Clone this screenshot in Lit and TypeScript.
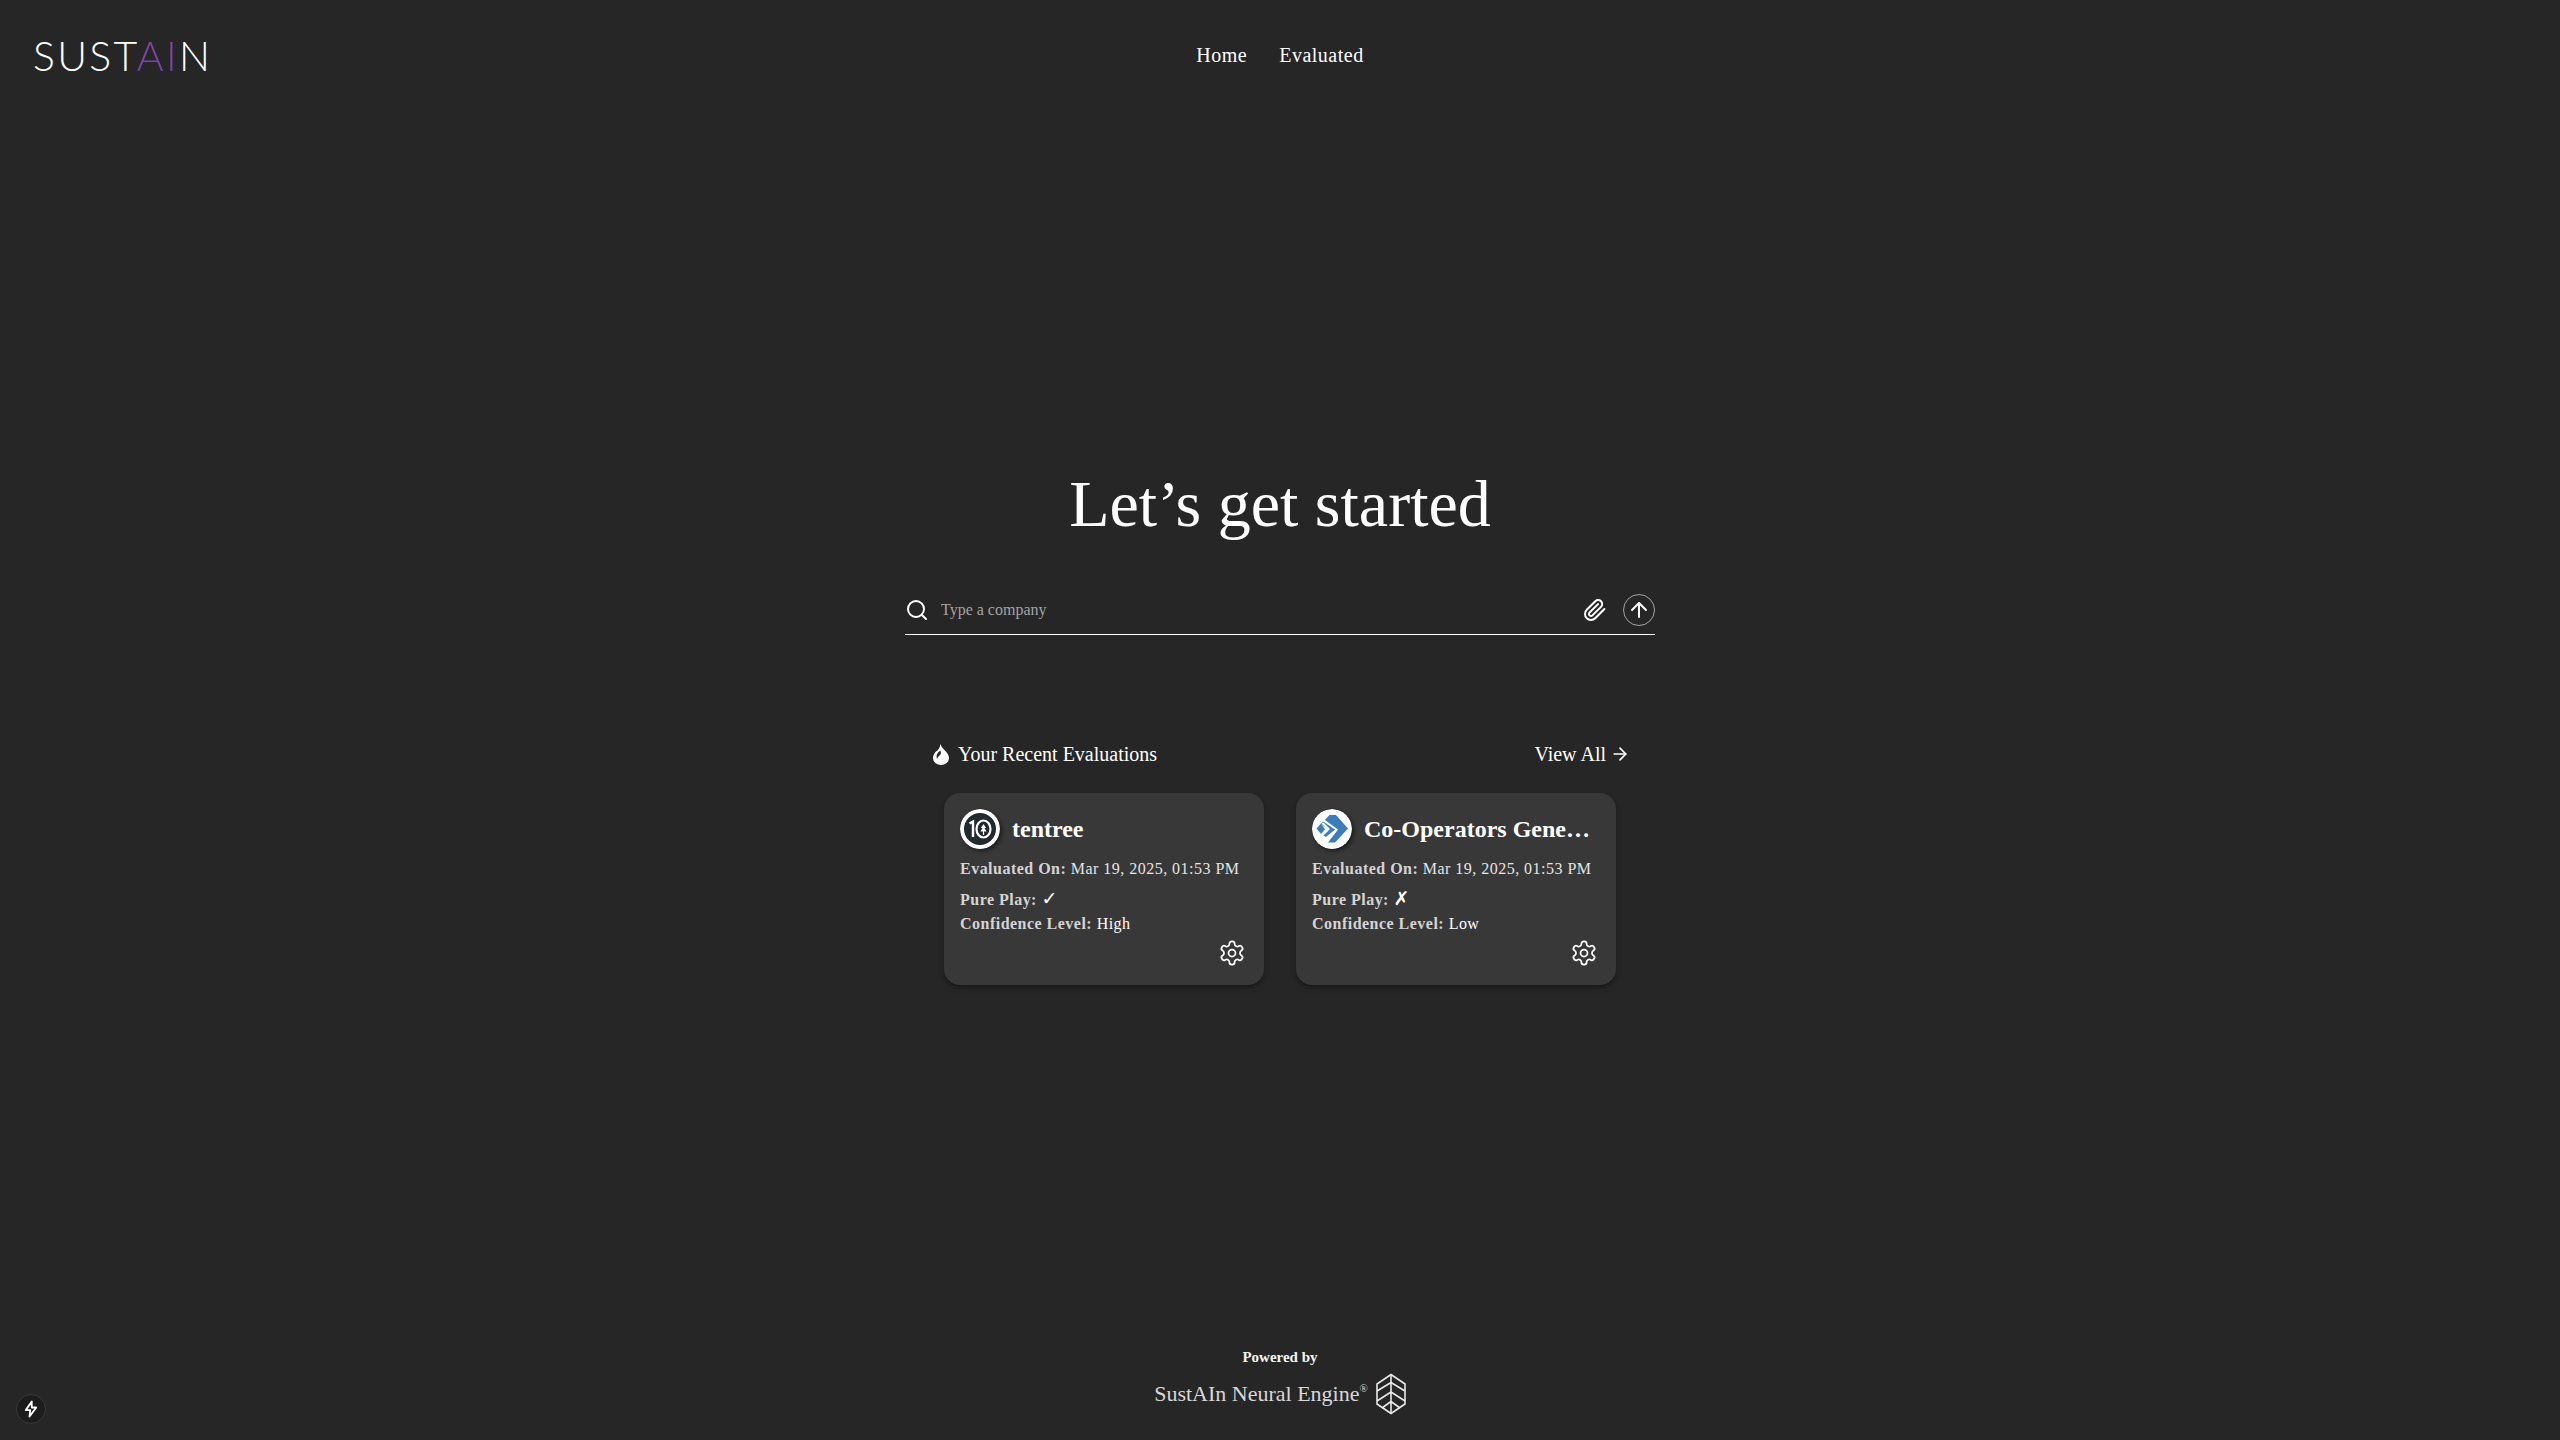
import { LitElement, html, css, svg } from "lit";
import { customElement } from "lit/decorators.js";

const gear = svg`<path d="M12.22 2h-.44a2 2 0 0 0-2 2v.18a2 2 0 0 1-1 1.73l-.43.25a2 2 0 0 1-2 0l-.15-.08a2 2 0 0 0-2.73.73l-.22.38a2 2 0 0 0 .73 2.73l.15.1a2 2 0 0 1 1 1.72v.51a2 2 0 0 1-1 1.74l-.15.09a2 2 0 0 0-.73 2.73l.22.38a2 2 0 0 0 2.73.73l.15-.08a2 2 0 0 1 2 0l.43.25a2 2 0 0 1 1 1.73V20a2 2 0 0 0 2 2h.44a2 2 0 0 0 2-2v-.18a2 2 0 0 1 1-1.73l.43-.25a2 2 0 0 1 2 0l.15.08a2 2 0 0 0 2.73-.73l.22-.39a2 2 0 0 0-.73-2.73l-.15-.08a2 2 0 0 1-1-1.74v-.5a2 2 0 0 1 1-1.74l.15-.09a2 2 0 0 0 .73-2.73l-.22-.38a2 2 0 0 0-2.73-.73l-.15.08a2 2 0 0 1-2 0l-.43-.25a2 2 0 0 1-1-1.73V4a2 2 0 0 0-2-2z"/><circle cx="12" cy="12" r="3"/>`;

@customElement("app-root")
export class AppRoot extends LitElement {
  static styles = css`
    :host { display: block; }
    .page {
      min-height: 1440px; height: 1440px; box-sizing: border-box; background: #262626; color: #fff;
      font-family: "Liberation Serif", "Times New Roman", serif;
      display: flex; flex-direction: column; position: relative; overflow: hidden;
    }
    header {
      display: grid; grid-template-columns: 1fr auto 1fr; align-items: center;
      height: 110px; padding: 0 33px; box-sizing: border-box; flex: none;
    }
    .logo {
      font-family: "Lato", sans-serif; font-weight: 300; font-size: 41px; line-height: 1;
      letter-spacing: 2.3px; color: #fff;
    }
    .logo .ai {
      background: linear-gradient(180deg, #8a45a8 0%, #7d44a8 70%, #3f3fae 100%);
      -webkit-background-clip: text; background-clip: text; color: transparent;
    }
    nav { display: flex; gap: 32px; font-size: 20px; line-height: 28px; letter-spacing: .5px; }
    main { flex: 1; display: flex; flex-direction: column; align-items: center; padding-top: 358px; }
    h1 { margin: 0; font-weight: 400; font-size: 66px; line-height: 72px; text-align: center; }
    .search {
      width: 750px; box-sizing: border-box; margin-top: 46px; height: 49px;
      border-bottom: 1px solid #fff; display: flex; align-items: center;
    }
    .search .ph { flex: 1; font-size: 16px; color: #a3a3a3; margin-left: 12px; }
    .icon { fill: none; stroke: #fff; stroke-linecap: round; stroke-linejoin: round; display: block; flex: none; }
    .send {
      width: 32px; height: 32px; border: 1px solid #a3a3a3; border-radius: 50%; box-sizing: border-box;
      display: flex; align-items: center; justify-content: center; margin-left: 16px;
    }
    .recent { width: 700px; margin-top: 105px; }
    .recent-head { display: flex; justify-content: space-between; align-items: center; font-size: 20px; line-height: 28px; }
    .title, .all { display: flex; align-items: center; }
    .flame { display: block; margin: 0 9px 0 3px; }
    .all svg { margin-left: 4px; }
    .cards { display: flex; gap: 32px; justify-content: center; margin-top: 25px; }
    .card {
      width: 320px; height: 192px; box-sizing: border-box; background: #383838; border-radius: 16px; padding: 16px;
      box-shadow: 0 4px 6px -1px rgba(0,0,0,.3), 0 2px 4px -2px rgba(0,0,0,.3);
      display: flex; flex-direction: column; color: #e5e5e5; font-size: 16px;
    }
    .name-row { display: flex; align-items: center; gap: 12px; height: 40px; }
    .avatar { width: 40px; height: 40px; border-radius: 50%; flex: none; filter: drop-shadow(2px 2px 2px rgba(0,0,0,.5)); display: block; }
    .name { font-size: 24px; font-weight: 700; color: #fff; white-space: nowrap; overflow: hidden; text-overflow: ellipsis; width: 232px; }
    .line { line-height: 24px; white-space: nowrap; letter-spacing: .48px; }
    .line b { color: #d4d4d4; }
    .line .v { color: #fff; }
    .line .mark { font-family: "DejaVu Sans", sans-serif; font-size: 19px; line-height: 0; color: #fff; letter-spacing: 0; }
    .date { margin-top: 8px; margin-bottom: 6px; }
    .pp { line-height: 25px; }
    .gear { margin-top: auto; align-self: flex-end; margin-right: 2px; margin-bottom: 2px; }
    footer { position: absolute; left: 0; right: 0; bottom: 0; display: flex; flex-direction: column; align-items: center; padding-bottom: 24px; }
    .powered { font-size: 15px; font-weight: 700; line-height: 24px; color: #f5f5f5; margin-bottom: 3px; }
    .engine { display: flex; align-items: center; gap: 8px; font-size: 22px; color: #d8d8d8; height: 44px; }
    .engine sup { font-size: 11px; line-height: 0; position: relative; top: -1px; vertical-align: super; }
    .dev {
      position: absolute; left: 16px; bottom: 16px; width: 30px; height: 30px; border-radius: 50%;
      background: #1c1c1c; border: 1px solid #3a3a3a; box-sizing: border-box;
      display: flex; align-items: center; justify-content: center;
    }
  `;

  private card(logo: unknown, name: string, pure: string, conf: string) {
    return html`<div class="card">
      <div class="name-row">${logo}<div class="name">${name}</div></div>
      <div class="line date"><b>Evaluated On:</b> Mar 19, 2025, 01:53 PM</div>
      <div class="line pp"><b>Pure Play:</b> <span class="mark">${pure}</span></div>
      <div class="line"><b>Confidence Level:</b> <span class="v">${conf}</span></div>
      <svg class="icon gear" width="28" height="28" viewBox="0 0 24 24" stroke-width="1.500">${gear}</svg>
    </div>`;
  }

  render() {
    const tentree = html`<svg class="avatar" viewBox="0 0 40 40">
      <circle cx="20" cy="20" r="18" fill="#222a2e" stroke="#fff" stroke-width="4"/>
      <path d="M9.500 14.500l3.500-2V28" fill="none" stroke="#fff" stroke-width="2.400"/>
      <ellipse cx="23.500" cy="20" rx="7" ry="8.500" fill="none" stroke="#fff" stroke-width="2.200"/>
      <path d="M23.500 15l-2.600 4h1.600l-2 3.500h2.400V26h1.200v-3.500h2.400l-2-3.500h1.600z" fill="#fff"/>
    </svg>`;
    const coop = html`<svg class="avatar" viewBox="0 0 40 40">
      <circle cx="20" cy="20" r="20" fill="#fff"/>
      <path d="M17.500 6 24 6 36 19.500 23 33.500 16 33.500 26 20.500 13 11z" fill="#3b7dbb"/>
      <path d="M11 12.500 23 20.500 14 28 10 25.500 16 20.500 8.500 15z" fill="#3b7dbb"/>
      <path d="M9 14.500 4.500 19.500 9 25 13 20.500z" fill="#3b7dbb"/>
      <path d="M9.500 14.500 15 20 9.500 25.500 11.500 26.500 18 20 11.500 13.500z" fill="#fff"/>
    </svg>`;
    return html`<div class="page">
      <header>
        <div class="logo">SUST<span class="ai">AI</span>N</div>
        <nav><span>Home</span><span>Evaluated</span></nav>
        <div></div>
      </header>
      <main>
        <h1>Let’s get started</h1>
        <div class="search">
          <svg class="icon" width="24" height="24" viewBox="0 0 24 24" stroke-width="2"><circle cx="11" cy="11" r="8"/><path d="m21 21-4.300-4.300"/></svg>
          <span class="ph">Type a company</span>
          <svg class="icon" width="24" height="24" viewBox="0 0 24 24" stroke-width="2"><path d="m21.440 11.050-9.190 9.190a6 6 0 0 1-8.490-8.490l8.570-8.570A4 4 0 1 1 18 8.840l-8.590 8.570a2 2 0 0 1-2.830-2.830l8.490-8.480"/></svg>
          <div class="send"><svg class="icon" width="24" height="24" viewBox="0 0 24 24" stroke-width="2"><path d="m5 12 7-7 7 7"/><path d="M12 19V5"/></svg></div>
        </div>
        <section class="recent">
          <div class="recent-head">
            <div class="title"><svg class="flame" width="16" height="21" viewBox="0 0 16 21"><path d="M7.500 0C8.500 5 16 8 16 14a8 7 0 0 1-16 0C0 11 1.500 9 3 7.500 5 6.500 7 3.500 7.500 0z" fill="#fff"/><path d="M7.500 6.500C4.500 8.500 2.800 11 4 15 5 12.500 7 11.500 8 9.500z" fill="#262626"/></svg>Your Recent Evaluations</div>
            <div class="all">View All <svg class="icon" width="20" height="20" viewBox="0 0 24 24" stroke-width="2"><path d="M5 12h14"/><path d="m12 5 7 7-7 7"/></svg></div>
          </div>
          <div class="cards">
            ${this.card(tentree, "tentree", "✓", "High")}
            ${this.card(coop, "Co-Operators General Insurance", "✗", "Low")}
          </div>
        </section>
      </main>
      <footer>
        <div class="powered">Powered by</div>
        <div class="engine"><span>SustAIn Neural Engine<sup>®</sup></span>
          <svg width="30" height="42" viewBox="0 0 30 42" fill="none" stroke="#e8e8e8" stroke-width="1.600" stroke-linejoin="round"><path d="M15 1.500 29 11v20L15 40.500 1 31V11z"/><path d="M15 1.500V40.500M1 18 15 9.500l14 8.500M1 28 15 19l14 9M6 35 15 28.500l9 6.500"/></svg>
        </div>
      </footer>
      <div class="dev"><svg class="icon" width="18" height="18" viewBox="0 0 24 24" stroke-width="2.400"><path d="M13 2 5 13.500h6l-1 8.500 9-12h-6z"/></svg></div>
    </div>`;
  }
}
